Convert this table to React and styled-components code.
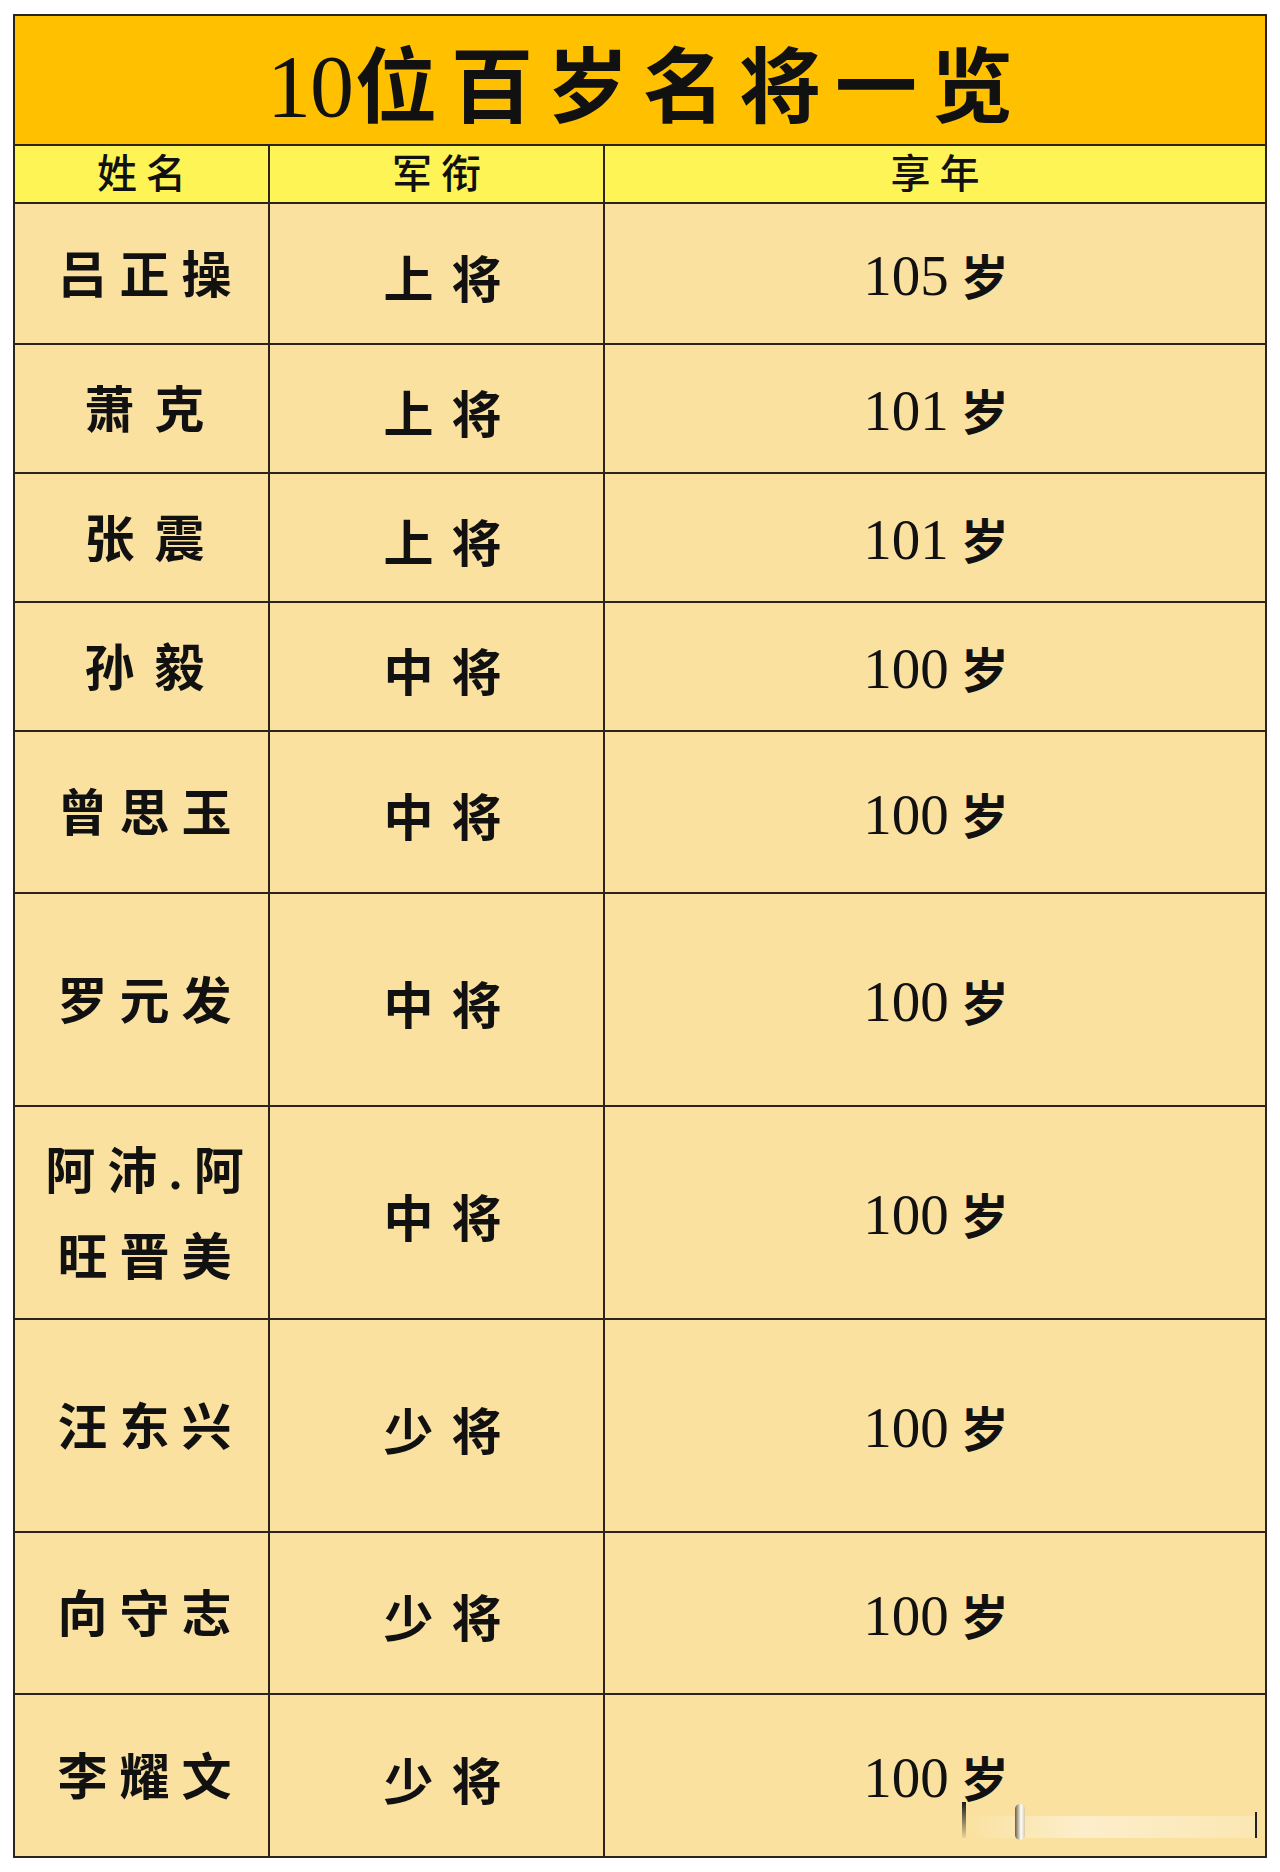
import React from 'react';
import styled, { createGlobalStyle } from 'styled-components';

const rows = [
  { name: ['吕正操'], rank: '上将', age: '105', h: 141 },
  { name: ['萧克'], rank: '上将', age: '101', h: 129 },
  { name: ['张震'], rank: '上将', age: '101', h: 129 },
  { name: ['孙毅'], rank: '中将', age: '100', h: 129 },
  { name: ['曾思玉'], rank: '中将', age: '100', h: 162 },
  { name: ['罗元发'], rank: '中将', age: '100', h: 213 },
  { name: ['阿沛.阿', '旺晋美'], rank: '中将', age: '100', h: 213 },
  { name: ['汪东兴'], rank: '少将', age: '100', h: 213 },
  { name: ['向守志'], rank: '少将', age: '100', h: 162 },
  { name: ['李耀文'], rank: '少将', age: '100', h: 163 }
];

const GlobalStyle = createGlobalStyle`
  html, body {
    margin: 0;
    padding: 0;
    background: #ffffff;
  }
  body {
    font-family: "Liberation Serif", "Noto Sans CJK SC", serif;
    color: #111;
  }
`;

const App = () => (
  <>
    <GlobalStyle />
    <Page>
      <Sheet>
        <TitleBar>
          <TitleNum>10</TitleNum>
          <TitleWords>位百岁名将一览</TitleWords>
        </TitleBar>
        <HeaderRow>
          <HeadCell>姓名</HeadCell>
          <HeadCell>军衔</HeadCell>
          <HeadCell>享年</HeadCell>
        </HeaderRow>
        {rows.map((r, i) => (
          <Row key={i} style={{ height: r.h }}>
            <Cell>
              <NameText $wide={r.name[0].length === 2}>
                {r.name.map((line, j) => (
                  <NameLine key={j}>{line}</NameLine>
                ))}
              </NameText>
            </Cell>
            <Cell>
              <RankText>{r.rank}</RankText>
            </Cell>
            <Cell>
              <AgeText>
                <Digits>{r.age}</Digits>
                <Unit>岁</Unit>
              </AgeText>
            </Cell>
          </Row>
        ))}
        <Watermark>
          <FadeLine />
          <DarkTick />
          <LightPill />
          <EndTick />
        </Watermark>
      </Sheet>
    </Page>
  </>
);

export default App;

const Page = styled.div`
  padding: 14px 13px 14px 13px;
`;

const Sheet = styled.div`
  position: relative;
  width: 1254px;
  box-sizing: border-box;
  border: 2px solid #2b241c;
  background: #fae1a0;
`;

const TitleBar = styled.div`
  height: 128px;
  background: #ffc000;
  display: flex;
  align-items: baseline;
  justify-content: center;
  padding-top: 21px;
  box-sizing: border-box;
  color: #111;
  line-height: 100px;
`;

const TitleNum = styled.span`
  font-size: 88px;
  font-weight: 400;
  letter-spacing: -1px;
  margin-right: 2px;
`;

const TitleWords = styled.span`
  font-size: 82px;
  font-weight: 700;
  letter-spacing: 14px;
  margin-right: -14px;
`;

const HeaderRow = styled.div`
  display: grid;
  grid-template-columns: 253px 335px 1fr;
  height: 58px;
  box-sizing: border-box;
  border-top: 2px solid #2b241c;
  background: #fff455;
`;

const HeadCell = styled.div`
  display: flex;
  align-items: center;
  justify-content: center;
  padding-top: 2px;
  box-sizing: border-box;
  font-size: 40px;
  line-height: 1;
  font-weight: 500;
  letter-spacing: 9px;
  text-indent: 9px;
  & + & {
    border-left: 2px solid #2b241c;
  }
`;

const Row = styled.div`
  display: grid;
  grid-template-columns: 253px 335px 1fr;
  box-sizing: border-box;
  border-top: 2px solid #2b241c;
`;

const Cell = styled.div`
  display: flex;
  align-items: center;
  justify-content: center;
  box-sizing: border-box;
  padding-top: 4px;
  & + & {
    border-left: 2px solid #2b241c;
  }
`;

const NameText = styled.div`
  display: flex;
  flex-direction: column;
  align-items: center;
  font-size: 50px;
  font-weight: 700;
  line-height: 86px;
  letter-spacing: ${p => (p.$wide ? '20px' : '12px')};
  text-indent: ${p => (p.$wide ? '20px' : '12px')};
  margin-left: 6px;
`;

const NameLine = styled.span`
  white-space: nowrap;
`;

const RankText = styled.div`
  font-size: 50px;
  font-weight: 700;
  letter-spacing: 18px;
  text-indent: 18px;
  margin-left: 12px;
`;

const AgeText = styled.div`
  display: flex;
  align-items: baseline;
  gap: 12px;
  margin-left: 2px;
`;

const Digits = styled.span`
  font-size: 57px;
  line-height: 1;
`;

const Unit = styled.span`
  font-size: 48px;
  font-weight: 700;
  line-height: 1;
`;

const Watermark = styled.div`
  position: absolute;
  left: 940px;
  bottom: 14px;
  width: 310px;
  height: 40px;
  pointer-events: none;
`;

const FadeLine = styled.div`
  position: absolute;
  left: 10px;
  right: 8px;
  top: 14px;
  height: 22px;
  background: linear-gradient(90deg, rgba(255,255,255,0), rgba(255,255,255,0.45) 40%, rgba(255,255,255,0.2));
`;

const DarkTick = styled.div`
  position: absolute;
  left: 7px;
  top: 0;
  width: 4px;
  height: 36px;
  background: linear-gradient(#1a1a1a, rgba(0,0,0,0.05));
`;

const LightPill = styled.div`
  position: absolute;
  left: 60px;
  top: 2px;
  width: 10px;
  height: 36px;
  border-radius: 5px;
  background: linear-gradient(90deg, #6a5a3a, #fff 60%, #d8c8a0);
`;

const EndTick = styled.div`
  position: absolute;
  right: 8px;
  top: 10px;
  width: 2px;
  height: 26px;
  background: #222;
`;
